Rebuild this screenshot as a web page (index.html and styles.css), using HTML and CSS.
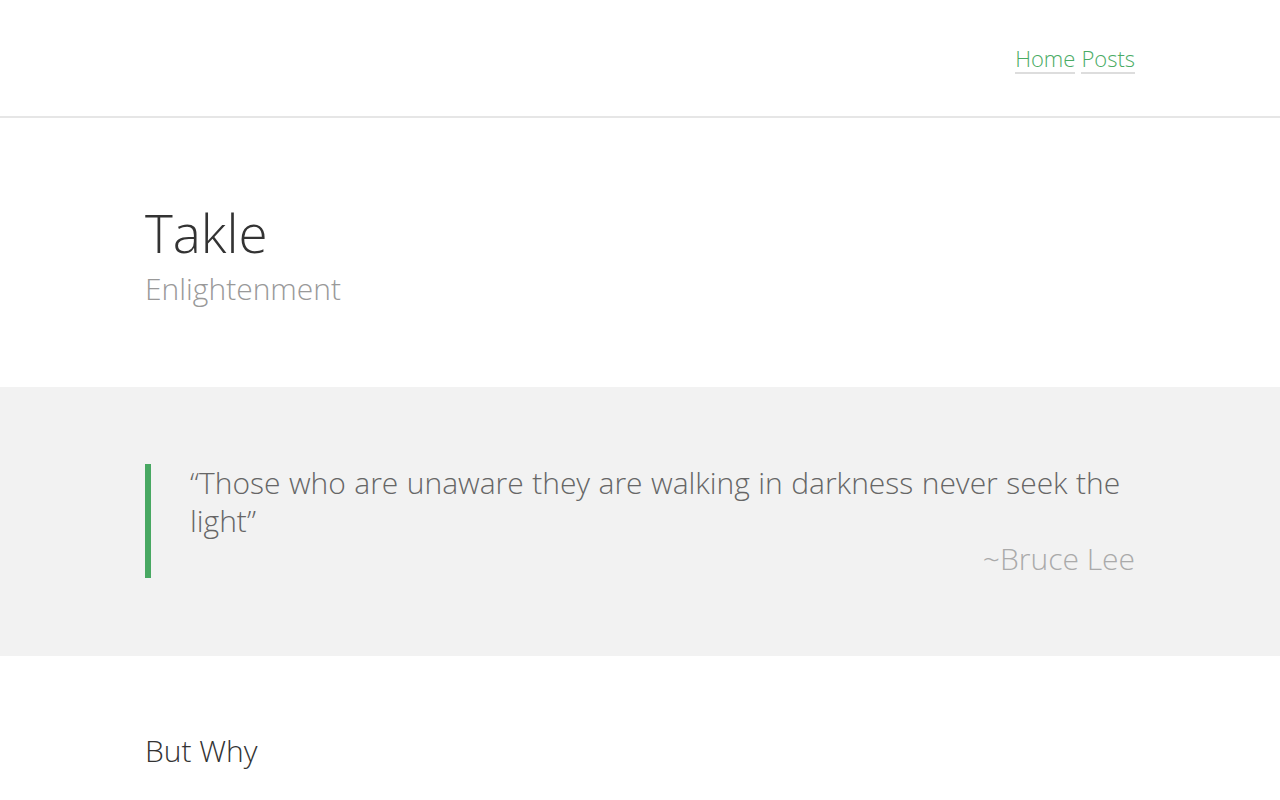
FILE: index.html
```html
<!DOCTYPE html>
<html lang="en">
<head>
<meta charset="utf-8">
<title>Takle</title>
<link rel="stylesheet" href="styles.css">
</head>
<body>
<header class="site-header">
  <div class="container header-inner">
    <nav class="nav">
      <a href="#" class="nav-link">Home</a>
      <a href="#" class="nav-link">Posts</a>
    </nav>
  </div>
</header>
<section class="hero">
  <div class="container">
    <h1 class="title">Takle</h1>
    <p class="subtitle">Enlightenment</p>
  </div>
</section>
<section class="quote-band">
  <div class="container">
    <blockquote class="quote">
      <p class="quote-text">“Those who are unaware they are walking in darkness never seek the light”</p>
      <p class="quote-author">~Bruce Lee</p>
    </blockquote>
  </div>
</section>
<section class="content">
  <div class="container">
    <h2 class="section-title">But Why</h2>
  </div>
</section>
</body>
</html>
```

FILE: styles.css
```css
* { box-sizing: border-box; }
html, body { margin: 0; padding: 0; }
body {
  font-family: "Open Sans", "Liberation Sans", sans-serif;
  font-weight: 300;
  background: #fff;
  color: #333;
}
.container {
  width: 990px;
  margin: 0 auto;
}
.site-header {
  height: 118px;
  border-bottom: 2px solid #e6e6e6;
}
.header-inner {
  display: flex;
  justify-content: flex-end;
  padding-top: 45px;
}
.nav {
  display: flex;
  gap: 6px;
}
.nav-link {
  font-size: 22px;
  line-height: 27px;
  color: #4aab64;
  text-decoration: none;
  border-bottom: 2px solid #dddddd;
}
.hero {
  padding: 83px 0 74px;
}
.title {
  margin: 0;
  font-size: 53px;
  font-weight: 300;
  line-height: 64px;
  color: #333;
}
.subtitle {
  margin: 0;
  font-size: 30px;
  line-height: 48px;
  color: #999;
}
.quote-band {
  background: #f2f2f2;
  padding: 77px 0 78px;
}
.quote {
  margin: 0;
  border-left: 6px solid #48a862;
  padding-left: 39px;
}
.quote-text {
  margin: 0;
  font-size: 30px;
  word-spacing: 0.6px;
  line-height: 38px;
  color: #666;
}
.quote-author {
  margin: 0;
  text-align: right;
  font-size: 30px;
  line-height: 38px;
  color: #aaa;
}
.content {
  padding-top: 75px;
}
.section-title {
  margin: 0;
  font-size: 30px;
  font-weight: 300;
  line-height: 40px;
  color: #333;
}
```
